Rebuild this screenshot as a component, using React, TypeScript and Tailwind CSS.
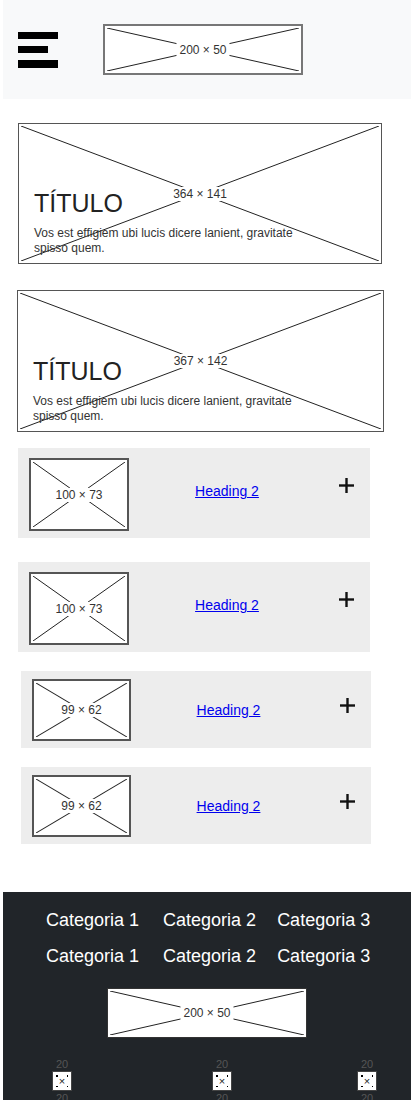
import React from "react";

const font = "font-['Liberation_Sans',Arial,sans-serif]";

// the wireframe image box: border, corner-to-corner cross, size label in the middle
const Placeholder: React.FC<{ label: string; className: string }> = ({ label, className }) => {
  return (
    <div className={`relative shrink-0 bg-white ${className}`}>
      <svg
        className="absolute inset-[2px] h-[calc(100%-4px)] w-[calc(100%-4px)]"
        viewBox="0 0 100 100"
        preserveAspectRatio="none"
      >
        <line x1="0" y1="0" x2="100" y2="100" stroke="#222" strokeWidth="1" vectorEffect="non-scaling-stroke" />
        <line x1="100" y1="0" x2="0" y2="100" stroke="#222" strokeWidth="1" vectorEffect="non-scaling-stroke" />
      </svg>
      <span className="absolute left-1/2 top-1/2 -translate-x-1/2 -translate-y-1/2 whitespace-nowrap bg-white px-[3px] text-[12px] leading-[14px] text-[#333]">
        {label}
      </span>
    </div>
  );
};

const Card: React.FC<{ label: string; className: string }> = ({ label, className }) => {
  return (
    <div className={`relative border-[1.5px] border-[#555] bg-white ${className}`}>
      <svg className="absolute inset-[2px] h-[calc(100%-4px)] w-[calc(100%-4px)]" viewBox="0 0 100 100" preserveAspectRatio="none">
        <line x1="0" y1="0" x2="100" y2="100" stroke="#222" strokeWidth="1" vectorEffect="non-scaling-stroke" />
        <line x1="100" y1="0" x2="0" y2="100" stroke="#222" strokeWidth="1" vectorEffect="non-scaling-stroke" />
      </svg>
      <span className="absolute left-1/2 top-1/2 -translate-x-1/2 -translate-y-1/2 whitespace-nowrap bg-white px-[3px] text-[12px] leading-[14px] text-[#333]">
        {label}
      </span>
      <div className="relative flex h-full flex-col justify-end pb-[7px] pl-[15px]">
        <h2 className="text-[25px] leading-[30px] text-[#222]">TÍTULO</h2>
        <p className="mt-[8px] max-w-[272px] text-[12px] leading-[15px] text-[#333]">
          Vos est effigiem ubi lucis dicere lanient, gravitate spisso quem.
        </p>
      </div>
    </div>
  );
};

const Plus = () => (
  <svg width="15" height="15" viewBox="0 0 15 15">
    <line x1="7.5" y1="0" x2="7.5" y2="15" stroke="#111" strokeWidth="2.4" />
    <line x1="0" y1="7.5" x2="15" y2="7.5" stroke="#111" strokeWidth="2.4" />
  </svg>
);

const ListItem: React.FC<{
  className: string;
  imgClass: string;
  label: string;
  headClass: string;
  plusClass: string;
}> = ({ className, imgClass, label, headClass, plusClass }) => {
  return (
    <div className={`flex items-center bg-[#ededed] pl-[11px] ${className}`}>
      <Placeholder label={label} className={`self-start border-2 border-[#555] ${imgClass}`} />
      <div className={`flex flex-1 justify-center pl-[3px] ${headClass}`}>
        <a href="#" className="text-[14px] leading-[18px] text-[#0000ee] underline">
          Heading 2
        </a>
      </div>
      <div className={`flex w-[48px] justify-center ${plusClass}`}>
        <Plus />
      </div>
    </div>
  );
};

const SmallIcon = () => (
  <div className="flex flex-col items-center text-[11px] leading-[14px] text-[#555]">
    <span>20</span>
    <div className="relative flex h-5 w-5 items-center justify-center border border-[#444] bg-white text-[11px] leading-none text-[#222]">
      <span className="absolute left-[3px] top-[3px] h-[1.5px] w-[1.5px] bg-black" />
      <span className="absolute right-[3px] top-[3px] h-[1.5px] w-[1.5px] bg-black" />
      <span className="absolute bottom-[3px] left-[3px] h-[1.5px] w-[1.5px] bg-black" />
      <span className="absolute bottom-[3px] right-[3px] h-[1.5px] w-[1.5px] bg-black" />
      ×
    </div>
    <span>20</span>
  </div>
);

export default function App() {
  return (
    <div className={`${font} w-[411px] overflow-hidden bg-white`}>
      <header className="ml-[3px] flex h-[99px] items-center bg-[#f8f9fa] pl-[15px]">
        <div className="flex flex-col gap-[7px]">
          <span className="h-[7px] w-10 bg-black" />
          <span className="h-[7px] w-[30px] bg-black" />
          <span className="h-[8px] w-10 bg-black" />
        </div>
        <Placeholder label="200 × 50" className="ml-[45px] h-[51px] w-[200px] border-2 border-[#777]" />
      </header>

      <Card label="364 × 141" className="ml-[18px] mt-[24px] h-[141px] w-[364px]" />
      <Card label="367 × 142" className="ml-[17px] mt-[26px] h-[142px] w-[367px]" />

      <ListItem
        className="ml-[18px] mt-[16px] h-[90px] w-[352px]"
        imgClass="mt-[10px] h-[73px] w-[100px]"
        label="100 × 73"
        headClass="mb-[4px]"
        plusClass="mb-[15px]"
      />
      <ListItem
        className="ml-[18px] mt-[24px] h-[90px] w-[352px]"
        imgClass="mt-[10px] h-[73px] w-[100px]"
        label="100 × 73"
        headClass="mb-[4px]"
        plusClass="mb-[15px]"
      />
      <ListItem
        className="ml-[21px] mt-[19px] h-[77px] w-[350px]"
        imgClass="mt-[8px] h-[62px] w-[99px]"
        label="99 × 62"
        headClass=""
        plusClass="mb-[8px]"
      />
      <ListItem
        className="ml-[21px] mt-[19px] h-[77px] w-[350px]"
        imgClass="mt-[8px] h-[62px] w-[99px]"
        label="99 × 62"
        headClass=""
        plusClass="mb-[8px]"
      />

      <footer className="ml-[3px] mt-[48px] bg-[#212529] pb-[40px] pt-[10px]">
        {[0, 1].map((row) => (
          <div key={row} className="flex h-[36px] items-center pl-[43px] text-[18px] leading-[36px] text-white">
            <span>Categoria 1</span>
            <span className="ml-[24px]">Categoria 2</span>
            <span className="ml-[21px]">Categoria 3</span>
          </div>
        ))}
        <div className="mt-[14px] flex justify-center">
          <Placeholder label="200 × 50" className="h-[50px] w-[200px] border border-[#333]" />
        </div>
        <div className="mt-[19px] flex items-start pl-[49px]">
          <SmallIcon />
          <div className="ml-[140px]">
            <SmallIcon />
          </div>
          <div className="ml-[125px]">
            <SmallIcon />
          </div>
        </div>
      </footer>
    </div>
  );
}
